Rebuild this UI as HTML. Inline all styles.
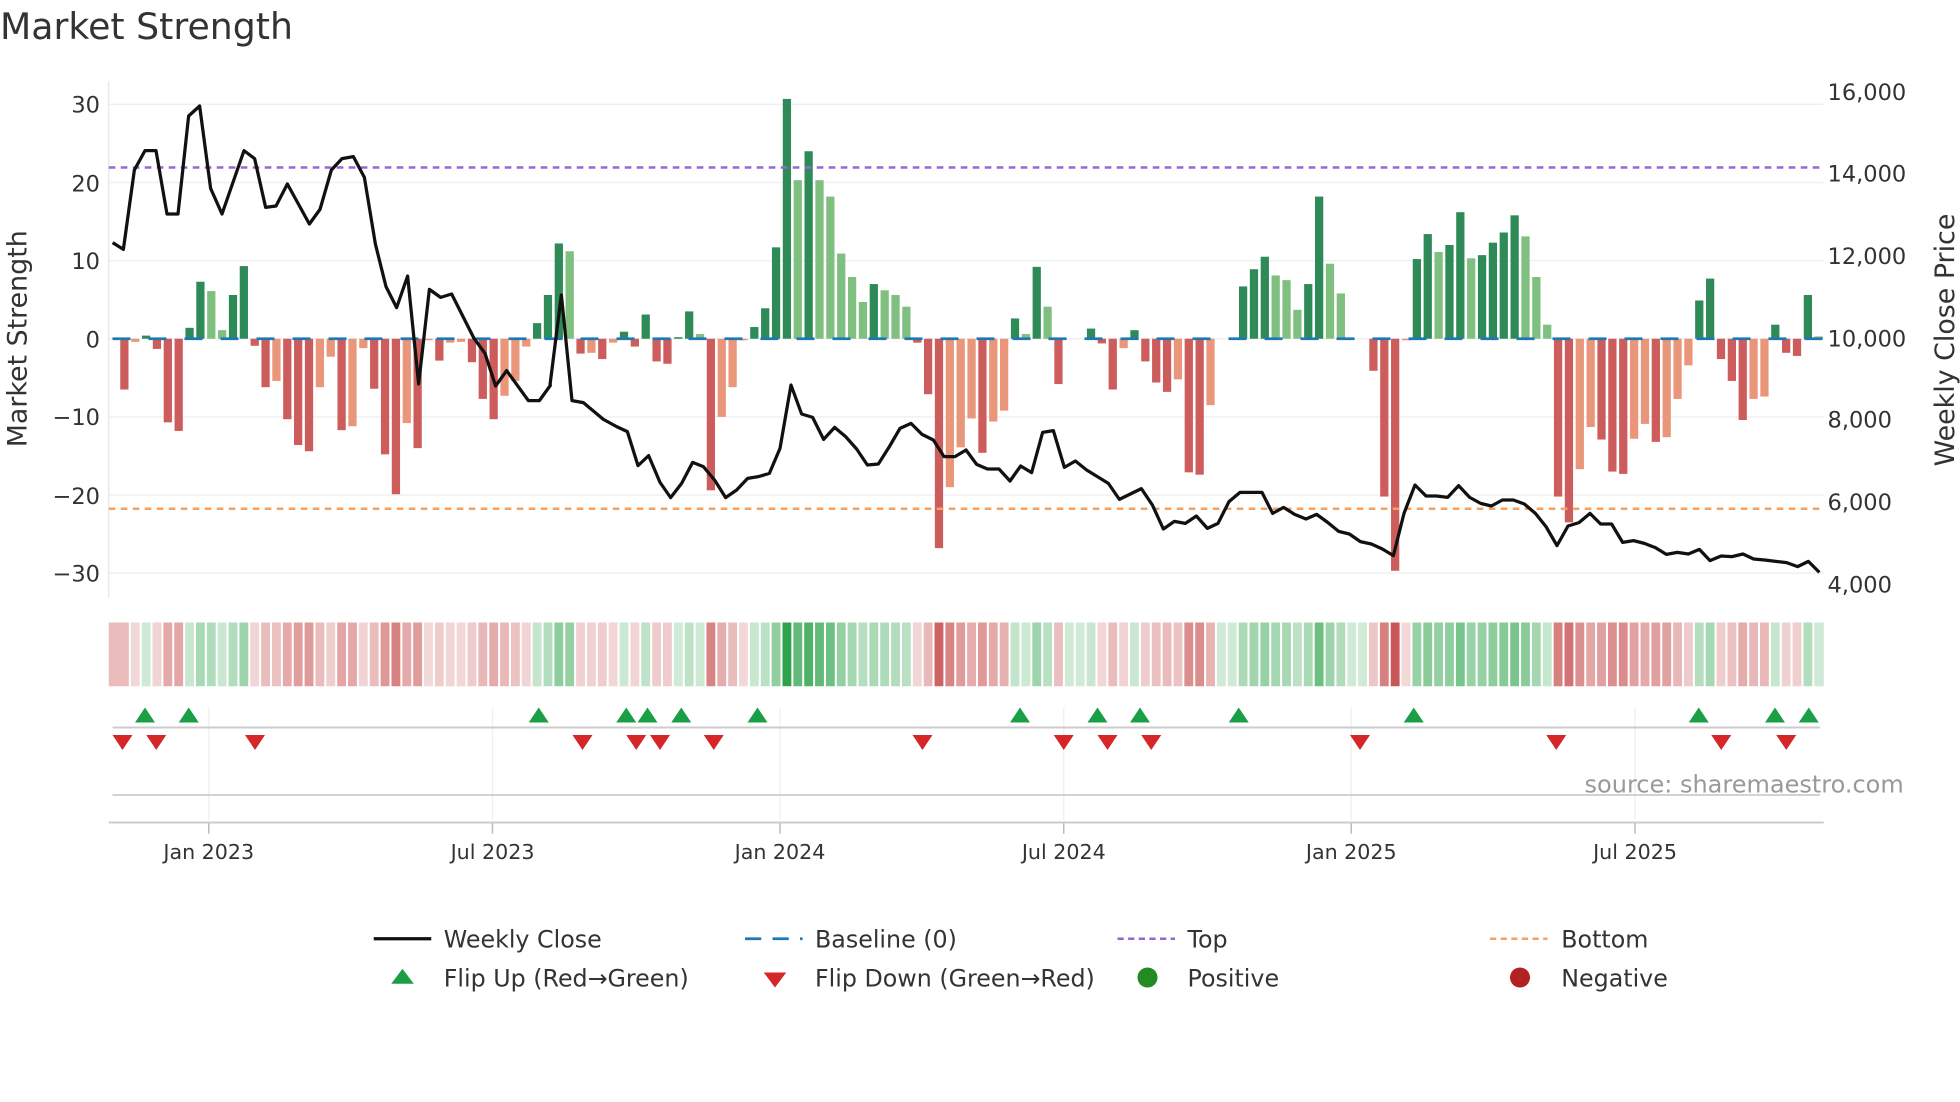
<!DOCTYPE html>
<html><head><meta charset="utf-8"><style>
html,body{margin:0;padding:0;background:#fff;width:1960px;height:1102px;overflow:hidden}
svg{display:block}
text{font-family:"DejaVu Sans","Liberation Sans",sans-serif;fill:#333}
</style></head><body>
<svg id="s" width="1960" height="1102" viewBox="0 0 1568 881.6" xmlns="http://www.w3.org/2000/svg">
<text x="0" y="31" font-size="29">Market Strength</text>
<g id="grid"></g>
<line x1="87" y1="65" x2="87" y2="478" stroke="#e4e6ea" stroke-width="1"/>
<g id="bars"></g>
<line x1="90" y1="271" x2="1459" y2="271" stroke="#1f77b4" stroke-width="2.2" stroke-dasharray="14.4 14.4"/>
<line x1="87" y1="134" x2="1459" y2="134" stroke="#9467d4" stroke-width="2" stroke-dasharray="5.3 4.3"/>
<line x1="87" y1="407" x2="1459" y2="407" stroke="#f4a261" stroke-width="2" stroke-dasharray="5.3 4.3"/>
<polyline id="price" fill="none" stroke="#111" stroke-width="2.6" stroke-linejoin="round"/>
<g id="heat"></g>
<g id="lower"></g>
<g font-size="18">
<text x="80" y="90" text-anchor="end">30</text>
<text x="80" y="153" text-anchor="end">20</text>
<text x="80" y="215" text-anchor="end">10</text>
<text x="80" y="278" text-anchor="end">0</text>
<text x="80" y="340" text-anchor="end">−10</text>
<text x="80" y="403" text-anchor="end">−20</text>
<text x="80" y="465" text-anchor="end">−30</text>
<text x="1462" y="80">16,000</text>
<text x="1462" y="145">14,000</text>
<text x="1462" y="211">12,000</text>
<text x="1462" y="277">10,000</text>
<text x="1462" y="342">8,000</text>
<text x="1462" y="408">6,000</text>
<text x="1462" y="474">4,000</text>
</g>
<text transform="translate(21,271) rotate(-90)" text-anchor="middle" font-size="21.5">Market Strength</text>
<text transform="translate(1563,272) rotate(-90)" text-anchor="middle" font-size="21.5">Weekly Close Price</text>
<text x="1523" y="634" text-anchor="end" font-size="19.2" style="fill:#999">source: sharemaestro.com</text>
<g font-size="16.5">
<text x="167" y="687" text-anchor="middle">Jan 2023</text>
<text x="394" y="687" text-anchor="middle">Jul 2023</text>
<text x="624" y="687" text-anchor="middle">Jan 2024</text>
<text x="851" y="687" text-anchor="middle">Jul 2024</text>
<text x="1081" y="687" text-anchor="middle">Jan 2025</text>
<text x="1308" y="687" text-anchor="middle">Jul 2025</text>
</g>
<g font-size="19">
<line x1="299" y1="751" x2="345" y2="751" stroke="#111" stroke-width="2.6"/>
<text x="355" y="758">Weekly Close</text>
<line x1="596" y1="751" x2="642" y2="751" stroke="#1f77b4" stroke-width="2.2" stroke-dasharray="13 9"/>
<text x="652" y="758">Baseline (0)</text>
<line x1="894" y1="751" x2="940" y2="751" stroke="#9467d4" stroke-width="2" stroke-dasharray="5 3.5"/>
<text x="950" y="758">Top</text>
<line x1="1192" y1="751" x2="1238" y2="751" stroke="#f4a261" stroke-width="2" stroke-dasharray="5 3.5"/>
<text x="1249" y="758">Bottom</text>
<polygon points="313,787 331,787 322,775" fill="#1a9e46"/>
<text x="355" y="789">Flip Up (Red→Green)</text>
<polygon points="611,778 629,778 620,790" fill="#d62728"/>
<text x="652" y="789">Flip Down (Green→Red)</text>
<circle cx="918" cy="782" r="8" fill="#228b22"/>
<text x="950" y="789">Positive</text>
<circle cx="1216" cy="782" r="8" fill="#b22222"/>
<text x="1249" y="789">Negative</text>
</g>
</svg>
<script>
var NS="http://www.w3.org/2000/svg";
function el(p,t,a){var e=document.createElementNS(NS,t);for(var k in a)e.setAttribute(k,a[k]);p.appendChild(e);return e;}
var g=document.getElementById('grid');
for(var v=-30;v<=30;v+=10){var y=271-v*6.25;el(g,'line',{x1:87,x2:1459,y1:y,y2:y,stroke:'#eef0f4','stroke-width':1.2});}
var D='#cd5c5c',L='#e9967a',G='#2e8b57',LG='#7fbf7f';
var data=[[-6.5,D],[-0.4,L],[0.4,G],[-1.3,D],[-10.7,D],[-11.8,D],[1.4,G],[7.3,G],[6.1,LG],[1.1,LG],[5.6,G],[9.3,G],[-0.9,D],[-6.2,D],[-5.4,L],[-10.3,D],[-13.6,D],[-14.4,D],[-6.2,L],[-2.3,L],[-11.7,D],[-11.2,L],[-1.2,L],[-6.4,D],[-14.8,D],[-19.9,D],[-10.8,L],[-14.0,D],[-0.2,L],[-2.8,D],[-0.5,L],[-0.4,L],[-3.0,D],[-7.7,D],[-10.3,D],[-7.3,L],[-5.4,L],[-1,L],[2,G],[5.6,G],[12.2,G],[11.2,LG],[-1.9,D],[-1.8,L],[-2.6,D],[-0.5,L],[0.9,G],[-1,D],[3.1,G],[-2.9,D],[-3.2,D],[0.2,G],[3.5,G],[0.6,LG],[-19.4,D],[-10,L],[-6.2,L],[-0.2,L],[1.5,G],[3.9,G],[11.7,G],[30.7,G],[20.3,LG],[24,G],[20.3,LG],[18.2,LG],[10.9,LG],[7.9,LG],[4.7,LG],[7.0,G],[6.2,LG],[5.6,LG],[4.1,LG],[-0.5,D],[-7.1,D],[-26.8,D],[-19,L],[-13.9,L],[-10.2,L],[-14.6,D],[-10.6,L],[-9.2,L],[2.6,G],[0.6,LG],[9.2,G],[4.1,LG],[-5.8,D],[0,G],[0,G],[1.3,G],[-0.6,D],[-6.5,D],[-1.2,L],[1.1,G],[-2.9,D],[-5.6,D],[-6.8,D],[-5.2,L],[-17.1,D],[-17.4,D],[-8.5,L],[0,G],[0,G],[6.7,G],[8.9,G],[10.5,G],[8.1,LG],[7.5,LG],[3.7,LG],[7.0,G],[18.2,G],[9.6,LG],[5.8,LG],[0,G],[0,G],[-4.1,D],[-20.2,D],[-29.7,D],[-0.2,L],[10.2,G],[13.4,G],[11.1,LG],[12.0,G],[16.2,G],[10.3,LG],[10.7,G],[12.3,G],[13.6,G],[15.8,G],[13.1,LG],[7.9,LG],[1.8,LG],[-20.2,D],[-23.5,D],[-16.7,L],[-11.3,L],[-12.9,D],[-17.0,D],[-17.3,D],[-12.8,L],[-10.9,L],[-13.2,D],[-12.6,L],[-7.7,L],[-3.4,L],[4.9,G],[7.7,G],[-2.6,D],[-5.4,D],[-10.4,D],[-7.7,L],[-7.4,L],[1.8,G],[-1.8,D],[-2.2,D],[5.6,G],[0.3,LG]];
var n=data.length,x0=99.5,sp=(1455-99.5)/(n-1);
var b=document.getElementById('bars'),h=document.getElementById('heat');
data.forEach(function(d,i){var v=d[0],x=x0+i*sp;var y1=271,y2=271-v*6.25;
 if(Math.abs(v)>0.05)el(b,'rect',{x:x-3.3,y:Math.min(y1,y2),width:6.6,height:Math.abs(y2-y1),fill:d[1]});
 var t=Math.min(Math.abs(v)/30,1)*0.75+0.22,c;
 if(v>=0){c=[40,160,70];}else{c=[200,80,80];}
 var r=Math.round(255+(c[0]-255)*t),gg=Math.round(255+(c[1]-255)*t),bb=Math.round(255+(c[2]-255)*t);
 el(h,'rect',{x:(i==0?87:x-sp/2+0.8),y:498,width:(i==0?x+sp/2-0.8-87:(i==n-1?1459-(x-sp/2+0.8):sp-1.6)),height:51,fill:'rgb('+r+','+gg+','+bb+')'});
});
var segs=[[100,[[38,488],[70,508],[103,270],[135,212],[168,212],[201,402],[234,402],[266,108],[299,78],[332,325],[366,402],[432,212],[464,236],[497,382],[528,378],[562,312],[628,432],[660,388],[694,270],[726,236],[760,230],[793,292],[826,492],[858,620],[890,683],[923,588],[956,912],[988,628],[1022,652],[1055,642],[1122,775],[1155,820],[1187,918],[1220,872],[1285,962],[1318,962],[1351,916]]],
[540,[[30,915],[64,645],[96,962],[130,968],[190,1018],[230,1040],[262,1055],[294,1157],[326,1127],[360,1207],[392,1253],[425,1210],[458,1147],[490,1160],[525,1202],[557,1253],[590,1230],[623,1195],[655,1190],[688,1180],[720,1105],[753,915],[785,1002],[818,1012],[851,1078],[884,1042],[917,1070],[950,1107],[982,1155],[1015,1152],[1048,1100],[1080,1045],[1113,1030],[1146,1063],[1180,1080],[1212,1130],[1245,1130],[1278,1110],[1310,1153],[1342,1167]]],
[980,[[25,1167],[57,1167],[90,1203],[122,1158],[155,1178],[188,1057],[220,1052],[253,1162],[286,1143],[320,1170],[352,1190],[385,1210],[418,1258],[451,1242],[484,1226],[517,1275],[550,1347],[583,1324],[616,1330],[649,1308],[682,1345],[714,1330],[747,1265],[780,1237],[846,1237],[878,1300],[911,1282],[944,1303],[978,1317],[1010,1303],[1043,1327],[1076,1354],[1108,1362],[1141,1385],[1174,1392],[1207,1407],[1240,1427],[1272,1300],[1305,1215],[1338,1248]]],
[1420,[[18,1248],[50,1248],[83,1252],[116,1217],[149,1252],[182,1270],[214,1278],[247,1260],[280,1260],[313,1272],[346,1300],[378,1340],[411,1397],[444,1338],[477,1328],[510,1300],[542,1332],[575,1332],[608,1387],[641,1382],[673,1390],[706,1403],[739,1423],[772,1417],[805,1422],[838,1408],[870,1442],[903,1428],[936,1430],[969,1422],[1001,1437],[1034,1440],[1067,1444],[1100,1448],[1133,1460],[1165,1444],[1198,1477]]]];
var pts=[];segs.forEach(function(s){s[1].forEach(function(p){pts.push(((s[0]+p[0]/3)/1.25).toFixed(1)+','+((80+p[1]/3)/1.25).toFixed(1));});});
document.getElementById('price').setAttribute('points',pts.join(' '));
var lo=document.getElementById('lower');
[167,394,624,851,1081,1308].forEach(function(x){el(lo,'line',{x1:x,x2:x,y1:566,y2:656,stroke:'#eef0f3','stroke-width':1.2});el(lo,'line',{x1:x,x2:x,y1:658,y2:667,stroke:'#bbb','stroke-width':1.2});});
el(lo,'line',{x1:90,x2:1456,y1:582,y2:582,stroke:'#ccc','stroke-width':1.6});
el(lo,'line',{x1:90,x2:1456,y1:636,y2:636,stroke:'#d2d2d2','stroke-width':1.6});
el(lo,'line',{x1:87,x2:1459,y1:658,y2:658,stroke:'#ccc','stroke-width':1.6});
[116,151,431,501,518,545,606,816,878,912,991,1131,1359,1420,1447].forEach(function(x){el(lo,'polygon',{points:(x-8)+',578 '+(x+8)+',578 '+x+',566',fill:'#1a9e46'});});
[98,125,204,466,509,528,571,738,851,886,921,1088,1245,1377,1429].forEach(function(x){el(lo,'polygon',{points:(x-8)+',588 '+(x+8)+',588 '+x+',600',fill:'#d62728'});});
</script>
</body></html>
